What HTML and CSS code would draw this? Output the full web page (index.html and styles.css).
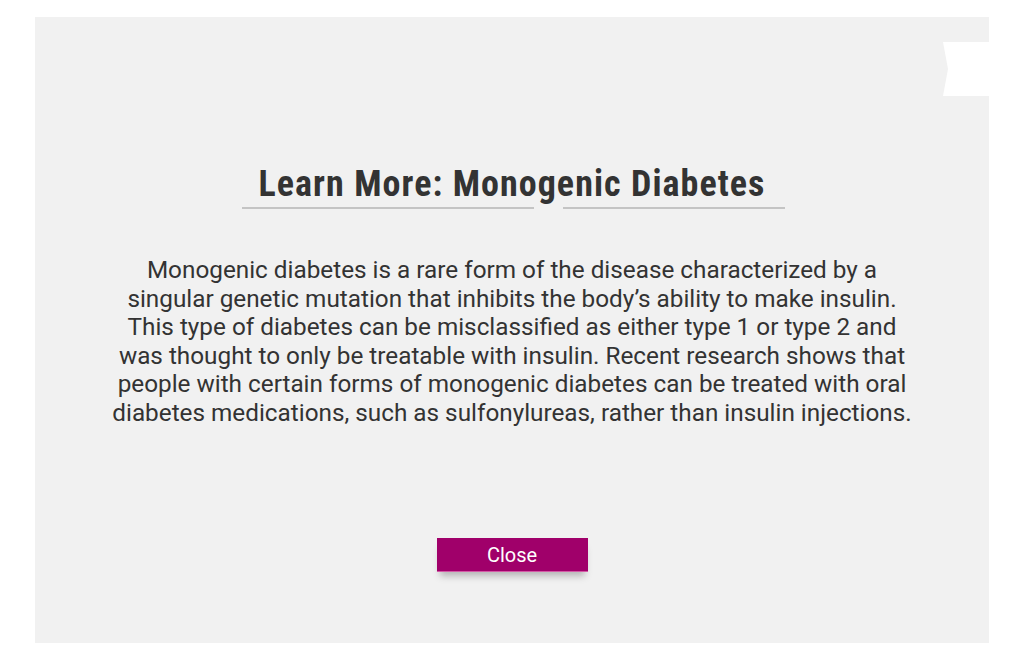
FILE: index.html
```html
<!DOCTYPE html>
<html>
<head>
<meta charset="utf-8">
<link rel="stylesheet" href="styles.css">
</head>
<body>
<div class="panel">
  <svg class="ribbon" width="46" height="54" viewBox="0 0 46 54"><polygon points="0,0 46,0 46,54 0,54 5,27" fill="#ffffff"/></svg>
  <div class="title-wrap">
    <h1 class="title">Learn More: Monogenic Diabetes</h1>
    <div class="rules"><span class="rule rule-left"></span><span class="rule rule-right"></span></div>
  </div>
  <p class="body-text">Monogenic diabetes is a rare form of the disease characterized by a<br>singular genetic mutation that inhibits the body’s ability to make insulin.<br>This type of diabetes can be misclassified as either type 1 or type 2 and<br>was thought to only be treatable with insulin. Recent research shows that<br>people with certain forms of monogenic diabetes can be treated with oral<br>diabetes medications, such as sulfonylureas, rather than insulin injections.</p>
  <div class="btn-wrap">
    <button class="close-btn">Close</button>
  </div>
</div>
</body>
</html>
```
FILE: styles.css
```css
html, body {
  margin: 0;
  padding: 0;
  background: #ffffff;
}
body {
  font-family: Roboto, "Liberation Sans", sans-serif;
}
.panel {
  position: relative;
  margin: 17px 0 0 35px;
  width: 954px;
  height: 626px;
  background: #f1f1f1;
  display: flex;
  flex-direction: column;
  align-items: center;
}
.ribbon {
  position: absolute;
  top: 25px;
  right: 0;
  display: block;
}
.title-wrap {
  margin-top: 147px;
  display: flex;
  flex-direction: column;
  align-items: center;
}
.title {
  margin: 0;
  font-family: Roboto, sans-serif;
  font-stretch: condensed;
  font-weight: 700;
  font-size: 36px;
  letter-spacing: 1.05px;
  line-height: 40px;
  color: #333333;
}
.rules {
  display: flex;
  margin-top: 3px;
  margin-left: 2px;
}
.rule {
  display: block;
  height: 2px;
  background: #c4c4c4;
}
.rule-left { width: 292px; }
.rule-right { width: 222px; margin-left: 29px; }
.body-text {
  margin: 47px 0 0 0;
  font-size: 24.3px;
  line-height: 28.5px;
  color: #333333;
  text-align: center;
}
.btn-wrap {
  margin-top: 111px;
}
.close-btn {
  display: block;
  width: 151px;
  height: 34px;
  border: 0;
  border-bottom: 1px solid #d35aa6;
  background: #a0006a;
  color: #ffffff;
  font-family: Roboto, sans-serif;
  font-size: 20px;
  padding: 0;
  box-shadow: 0 7px 7px -3px rgba(0,0,0,0.25);
}
```
